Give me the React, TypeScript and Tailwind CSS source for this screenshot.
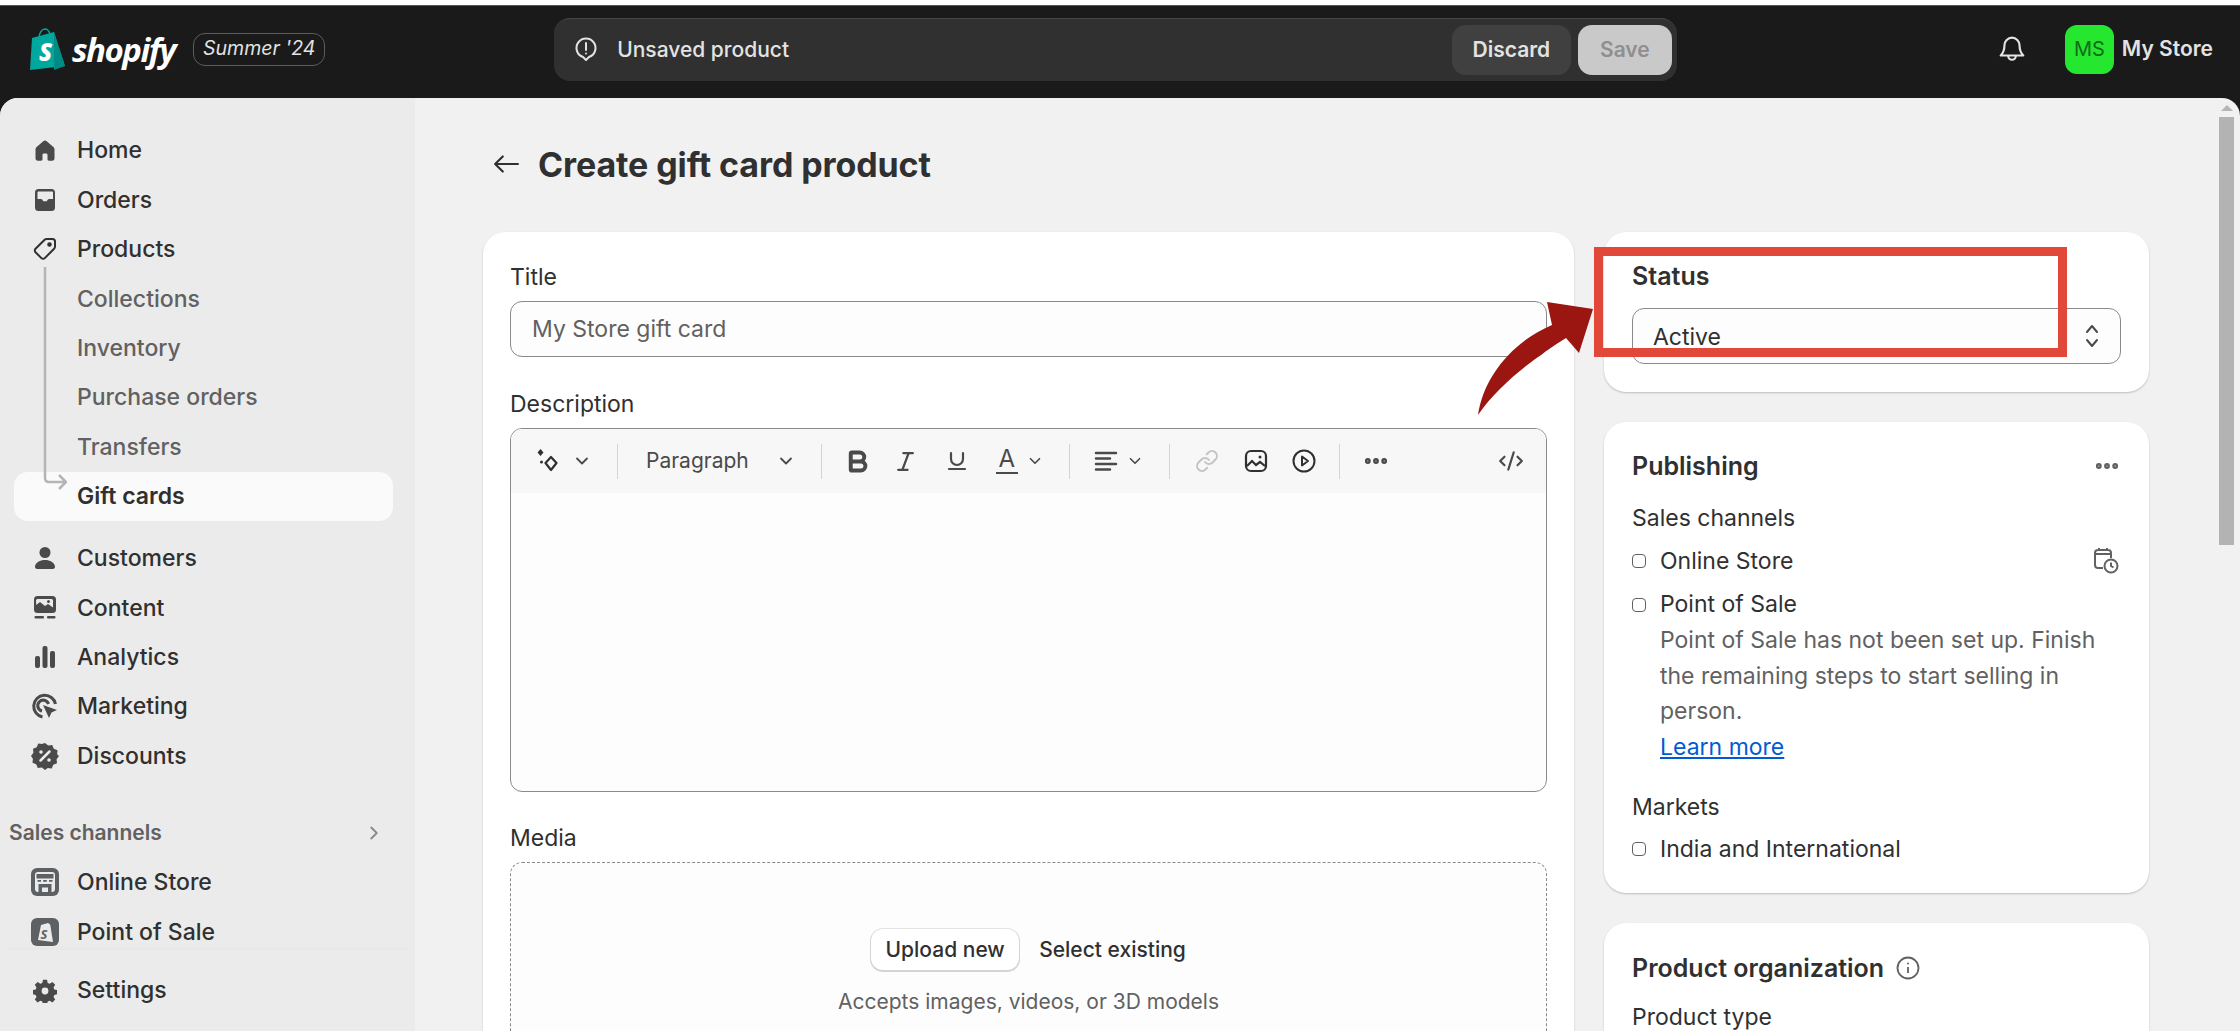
import React from "react";
import { Bold, ChevronDown, ChevronRight, CodeXml, Ellipsis, Italic, Link, Underline } from "lucide-react";

const Home = () => (
  <svg viewBox="0 0 24 24" className="h-[24px] w-[24px]" fill="#4a4a4a">
    <path d="M12 1.500c-.6 0-1.200.3-1.700.7L3.600 8c-.7.6-1.100 1.400-1.100 2.300v9.200c0 1.200 1 2.200 2.200 2.200h3.400c.8 0 1.400-.6 1.400-1.400v-4.500c0-.8.6-1.400 1.400-1.400h2.200c.8 0 1.400.6 1.400 1.400v4.500c0 .8.6 1.400 1.400 1.400h3.400c1.200 0 2.200-1 2.200-2.200v-9.200c0-.9-.4-1.700-1.100-2.300l-6.700-5.800c-.5-.4-1.100-.7-1.700-.7z" />
  </svg>
);

const Orders = () => (
  <svg viewBox="0 0 24 24" className="h-[24px] w-[24px]" fill="#4a4a4a">
    <path fillRule="evenodd" d="M5.500 1h13A3.500 3.500 0 0 1 22 4.500v15a3.500 3.500 0 0 1-3.500 3.500h-13A3.500 3.500 0 0 1 2 19.500v-15A3.500 3.500 0 0 1 5.500 1zM5.500 3.500a1 1 0 0 0-1 1V11h3.300c.8 0 1.300.4 1.700 1l.8 1.200h3.400l.8-1.200c.4-.6.9-1 1.700-1h3.800V4.500a1 1 0 0 0-1-1z" />
  </svg>
);

const Tag = () => (
  <svg viewBox="0 0 24 24" className="h-[24px] w-[24px]" fill="none" stroke="#303030" strokeWidth="2">
    <path d="M14.500 2h5a2.500 2.500 0 0 1 2.500 2.500v5c0 .9-.3 1.600-.9 2.200l-9.300 9.400a2.400 2.400 0 0 1-3.400 0l-5.900-5.900a2.400 2.400 0 0 1 0-3.400l9.400-9.300c.6-.6 1.300-.5 2.600-.5z" />
    <circle cx="16.500" cy="7.500" r="1.300" fill="#303030" />
  </svg>
);

const Customers = () => (
  <svg viewBox="0 0 24 24" className="h-[24px] w-[24px]" fill="#4a4a4a">
    <circle cx="12" cy="6.500" r="5.500" />
    <path d="M12 14c-5 0-9.500 2.500-10 6.500-.2 1.300.8 2.500 2.100 2.500h15.800c1.300 0 2.300-1.200 2.100-2.500C21.500 16.500 17 14 12 14z" />
  </svg>
);

const Content = () => (
  <svg viewBox="0 0 24 24" className="h-[24px] w-[24px]" fill="#4a4a4a">
    <path fillRule="evenodd" d="M4.500 0h15A3.500 3.500 0 0 1 23 3.500v10a3.500 3.500 0 0 1-3.500 3.500h-15A3.500 3.500 0 0 1 1 13.500v-10A3.500 3.500 0 0 1 4.500 0zM3.300 9l3.700-3 5 4 3-2 5 3.500v-7a1.500 1.500 0 0 0-1.500-1.500h-14a1.500 1.500 0 0 0-1.500 1.500z" />
    <circle cx="15.500" cy="5.500" r="1.500" />
    <rect x="1.500" y="20" width="9.500" height="2.500" rx="1" />
    <rect x="14" y="20" width="8.500" height="2.500" rx="1" />
  </svg>
);

const Analytics = () => (
  <svg viewBox="0 0 24 24" className="h-[24px] w-[24px]" fill="#4a4a4a">
    <rect x="2" y="11" width="5" height="12" rx="2" />
    <rect x="9.500" y="1" width="5" height="22" rx="2" />
    <rect x="17" y="6" width="5" height="17" rx="2" />
  </svg>
);

const Marketing = () => (
  <svg viewBox="0 0 28 28" className="h-[28px] w-[28px]" fill="none" stroke="#4a4a4a" strokeWidth="3">
    <path d="M11.500 24A11 11 0 1 1 24.500 11" />
    <path d="M11 18a5.500 5.500 0 1 1 6.500-7" />
    <path d="M12 12l14 5-5.500 2.500L18 25z" fill="#4a4a4a" stroke="none" />
  </svg>
);

const Discounts = () => (
  <svg viewBox="0 0 28 28" className="h-[28px] w-[28px]">
    <path fill="#4a4a4a" d="M14 1l3.200 2.400 4-.4 1.600 3.700 3.700 1.600-.4 4L28 14l-2.400 3.200.4 4-3.700 1.600-1.600 3.700-4-.4L14 28l-3.200-2.400-4 .4-1.600-3.700-3.700-1.600.4-4L0 14l2.400-3.200-.4-4 3.700-1.600L7.300 1.500l3.500.4z" />
    <path d="M9.500 18.500l9-9" stroke="#ebebeb" strokeWidth="2.500" strokeLinecap="round" />
    <circle cx="10" cy="10" r="1.800" fill="#ebebeb" />
    <circle cx="18" cy="18" r="1.800" fill="#ebebeb" />
  </svg>
);

const OnlineStore = () => (
  <svg viewBox="0 0 28 28" className="h-[28px] w-[28px]">
    <rect width="28" height="28" rx="6" fill="#5e6163" />
    <rect x="4" y="4" width="20" height="20" rx="3" fill="#ebebeb" />
    <path d="M5.500 6h17v4.500h-17z" fill="#5e6163" />
    <path d="M6.500 12h3.500v1.800H6.500zM12.200 12h3.600v1.800h-3.600zM18 12h3.500v1.800H18z" fill="#5e6163" />
    <path d="M7.500 16h13v8h-3.500v-4.500h-6V24H7.500z" fill="#5e6163" />
  </svg>
);

const PointOfSale = () => (
  <svg viewBox="0 0 28 28" className="h-[28px] w-[28px]">
    <rect width="28" height="28" rx="6" fill="#5e6163" />
    <path d="M10 7l7-2 2.200 1.500L22 24l-15-2z" fill="#ebebeb" />
    <text x="9.500" y="21" fontSize="13" fontWeight="700" fontStyle="italic" fill="#5e6163" fontFamily="Open Sans, sans-serif">S</text>
  </svg>
);

const Gear = () => (
  <svg viewBox="0 0 24 24" className="h-[24px] w-[24px]">
    <path fill="#4a4a4a" d="M10 .8h4l.7 3.100 2 .8 2.700-1.700 2.800 2.800-1.700 2.700.8 2 3.100.7v4l-3.100.7-.8 2 1.700 2.700-2.800 2.800-2.700-1.700-2 .8-.7 3.100h-4l-.7-3.100-2-.8-2.700 1.700-2.800-2.800 1.700-2.700-.8-2-3.100-.7v-4l3.100-.7.8-2-1.700-2.700 2.800-2.800 2.700 1.700 2-.8z" />
    <circle cx="12" cy="12" r="3.400" fill="#ebebeb" />
  </svg>
);

const Row = ({ icon, label, dim }: { icon?: React.ReactNode; label: string; dim?: boolean }) => (
  <div className="flex h-[49.4px] items-center">
    <div className="flex w-[77px] justify-center pl-[24px] pr-[11px]">{icon}</div>
    <span className={dim ? "text-[#616161]" : "text-[#303030]"}>{label}</span>
  </div>
);

const Sidebar = () => (
  <aside className="flex w-[415px] shrink-0 flex-col bg-[#ebebeb] text-[23px] font-medium">
    <div className="min-h-0 flex-1 overflow-hidden pt-[28px]">
      <Row icon={<Home />} label="Home" />
      <Row icon={<Orders />} label="Orders" />
      <Row icon={<Tag />} label="Products" />
      <div className="relative">
        {/* connector from Products down to the selected child */}
        <svg className="absolute left-[43px] top-[-7px] z-10" width="24" height="234" fill="none" stroke="#b5b5b5" strokeWidth="2.500">
          <path d="M2 0v211q0 4 4 4h16M16 208l7 7-7 7" />
        </svg>
        <Row label="Collections" dim />
        <Row label="Inventory" dim />
        <Row label="Purchase orders" dim />
        <Row label="Transfers" dim />
        <div className="ml-[14px] flex h-[49px] w-[379px] items-center rounded-[14px] bg-[#fafafa] pl-[63px] font-semibold text-[#303030]">
          Gift cards
        </div>
      </div>
      <div className="mt-[13px]">
        <Row icon={<Customers />} label="Customers" />
        <Row icon={<Content />} label="Content" />
        <Row icon={<Analytics />} label="Analytics" />
        <Row icon={<Marketing />} label="Marketing" />
        <Row icon={<Discounts />} label="Discounts" />
      </div>
      <div className="mt-[28px] flex h-[49px] items-center justify-between pl-[9px] pr-[30px] text-[21px] font-semibold text-[#616161]">
        Sales channels
        <ChevronRight size={22} color="#8a8a8a" strokeWidth={2} />
      </div>
      <Row icon={<OnlineStore />} label="Online Store" />
      <Row icon={<PointOfSale />} label="Point of Sale" />
    </div>
    <div className="h-[81px] shrink-0 pt-[16px] shadow-[0_-6px_8px_-7px_rgba(0,0,0,0.05)]">
      <Row icon={<Gear />} label="Settings" />
    </div>
  </aside>
);

const TopBar = () => (
  <header className="flex h-[92px] shrink-0 items-center bg-[#1a1a1a] pb-[6px] pl-[28px] pr-[27px]">
    <svg viewBox="0 0 38 42" className="h-[42px] w-[38px]">
      <path d="M4 10l22-6 11 34-35 4z" fill="#00a79d" />
      <path d="M26 4l11 34-11 4z" fill="#008b84" />
      <path d="M11 10c0-5 3-9 6-9s4 2 5 5" fill="none" stroke="#00a79d" strokeWidth="1.500" />
      <text x="11" y="33" fontSize="24" fontWeight="800" fontStyle="italic" fill="#fff" fontFamily="Open Sans, sans-serif">S</text>
    </svg>
    <span className="ml-[6px] font-['Open_Sans',sans-serif] text-[33px] font-bold italic leading-none tracking-[-1.500px] text-white">shopify</span>
    <span className="ml-[18px] flex h-[33px] w-[132px] items-center justify-center rounded-[12px] border border-[#5c5c5c] text-[19.500px] italic text-[#e3e3e3]">
      Summer '24
    </span>
    <div className="ml-[229px] flex h-[63px] w-[1123px] items-center rounded-[16px] border-t border-[#454545] bg-[#303030] pl-[20px] pr-[5px]">
      <svg viewBox="0 0 24 26" className="h-[26px] w-[24px]" fill="none" stroke="#e3e3e3" strokeWidth="2">
        <path d="M12 23l-3-3A9.500 9.500 0 1 1 15 20z" strokeLinejoin="round" />
        <path d="M12 6v7" strokeLinecap="round" />
        <circle cx="12" cy="16.500" r="1" fill="#e3e3e3" stroke="none" />
      </svg>
      <span className="ml-[19px] flex-1 text-[21px] font-medium text-[#e3e3e3]">Unsaved product</span>
      <button className="h-[50px] w-[119px] rounded-[14px] bg-[#404040] text-[21px] font-semibold text-[#e3e3e3]">Discard</button>
      <button className="ml-[7px] h-[50px] w-[94px] rounded-[14px] bg-[#c9c9c9] text-[21px] font-semibold text-[#8f8f8f]">Save</button>
    </div>
    <svg viewBox="0 0 26 26" className="ml-[321px] h-[28px] w-[28px]" fill="none" stroke="#e3e3e3" strokeWidth="2">
      <path d="M13 2.500a7 7 0 0 0-7 7c0 5-1 7-3.500 9.500h21c-2.500-2.500-3.500-4.500-3.500-9.500a7 7 0 0 0-7-7z" strokeLinejoin="round" />
      <path d="M9.500 19.500a3.500 3.500 0 0 0 7 0" />
    </svg>
    <div className="ml-[39px] flex h-[49px] w-[49px] items-center justify-center rounded-[12px] bg-[#26e72f] text-[20px] text-[#0e6b17]">MS</div>
    <span className="ml-[8px] whitespace-nowrap text-[21px] font-semibold text-[#e3e3e3]">My Store</span>
  </header>
);

const Sep = ({ className }: { className: string }) => <div className={`h-[35px] w-px bg-[#d4d4d4] ${className}`} />;

const Toolbar = () => (
  <div className="flex h-[64px] items-center bg-[#f7f7f7] text-[#4a4a4a]">
    <svg viewBox="0 0 26 26" className="ml-[24px] h-[26px] w-[26px]" fill="none" stroke="#303030" strokeWidth="2.200">
      <path d="M5.500 1l3 3.500-3 3.500-3-3.500z" fill="#303030" stroke="none" />
      <path d="M16 9l5.500 6-5.500 7-5.500-7z" strokeLinejoin="round" />
      <circle cx="6.500" cy="14" r="1.500" fill="#303030" stroke="none" />
    </svg>
    <ChevronDown size={20} strokeWidth={2.200} className="ml-[11px]" />
    <Sep className="ml-[25px]" />
    <span className="ml-[28px] text-[21px]">Paragraph</span>
    <ChevronDown size={20} strokeWidth={2.200} className="ml-[27px]" />
    <Sep className="ml-[25px]" />
    <Bold size={27} strokeWidth={3.500} className="ml-[22px]" />
    <Italic size={25} strokeWidth={2.200} className="ml-[22px]" />
    <Underline size={24} strokeWidth={2.200} className="ml-[27px]" />
    <div className="ml-[27px] flex flex-col items-center">
      <span className="h-[20px] text-[24px] leading-[20px]">A</span>
      <span className="mt-[3px] h-[2px] w-[22px] bg-[#4a4a4a]" />
    </div>
    <ChevronDown size={18} strokeWidth={2.200} className="ml-[8px]" />
    <Sep className="ml-[25px]" />
    <svg viewBox="0 0 24 24" className="ml-[24px] h-[24px] w-[24px]" stroke="#4a4a4a" strokeWidth="2.500" strokeLinecap="round">
      <path d="M2 4h20M2 9.500h14M2 15h20M2 20.500h14" />
    </svg>
    <ChevronDown size={18} strokeWidth={2.200} className="ml-[8px]" />
    <Sep className="ml-[25px]" />
    <Link size={24} strokeWidth={2} color="#c4c4c4" className="ml-[25px]" />
    <svg viewBox="0 0 24 24" className="ml-[25px] h-[24px] w-[24px]" fill="none" stroke="#303030" strokeWidth="2.200">
      <rect x="2" y="2" width="20" height="20" rx="5" />
      <path d="M3 17l5-5 4 4 4-3 5 4" />
      <circle cx="16" cy="8" r="1.500" fill="#303030" stroke="none" />
    </svg>
    <svg viewBox="0 0 24 24" className="ml-[24px] h-[24px] w-[24px]" fill="none" stroke="#303030" strokeWidth="2">
      <circle cx="12" cy="12" r="10.500" />
      <path d="M10 7.500l6 4.500-6 4.500z" strokeLinejoin="round" />
    </svg>
    <Sep className="ml-[23px]" />
    <Ellipsis size={28} strokeWidth={3} className="ml-[22px]" />
    <CodeXml size={26} strokeWidth={2} className="ml-auto mr-[22px]" />
  </div>
);

const Bullet = () => <span className="h-[14px] w-[14px] shrink-0 rounded-[4px] border-[1.500px] border-[#616161]" />;

const UpDown = () => (
  <svg viewBox="0 0 14 26" className="h-[26px] w-[14px]" fill="none" stroke="#4a4a4a" strokeWidth="2" strokeLinecap="round" strokeLinejoin="round">
    <path d="M2 9l5-6 5 6M2 17l5 6 5-6" />
  </svg>
);

const Card = ({ className, children }: { className?: string; children: React.ReactNode }) => (
  <section className={`rounded-[22px] bg-white shadow-[0_1px_2px_rgba(0,0,0,0.22)] ${className ?? ""}`}>{children}</section>
);

const MainForm = () => (
  <Card className="w-[1091px] shrink-0 px-[27px] pt-[31px]">
    <div className="leading-[28px]">Title</div>
    <div className="mt-[10px] flex h-[56px] items-center rounded-[12px] border border-[#8a8a8a] bg-[#fdfdfd] pl-[21px] text-[#616161]">
      My Store gift card
    </div>
    <div className="mt-[33px] leading-[28px]">Description</div>
    <div className="mt-[10px] h-[364px] overflow-hidden rounded-[12px] border border-[#8a8a8a] bg-[#fdfdfd]">
      <Toolbar />
    </div>
    <div className="mt-[32px] leading-[28px]">Media</div>
    <div className="mt-[10px] flex h-[330px] flex-col items-center rounded-[12px] border border-dashed border-[#8a8a8a] bg-[#fdfdfd] pt-[66px]">
      <div className="flex items-center">
        <button className="h-[41px] w-[148px] rounded-[12px] bg-white text-[21px] font-medium shadow-[0_1px_0_1px_#d4d4d4,0_0_0_1px_#e3e3e3]">Upload new</button>
        <span className="ml-[20px] text-[21px] font-medium">Select existing</span>
      </div>
      <div className="mt-[16px] text-[21px] text-[#616161]">Accepts images, videos, or 3D models</div>
    </div>
  </Card>
);

const SideCards = () => (
  <div className="flex w-[545px] shrink-0 flex-col gap-[30px]">
    <Card className="h-[160px] px-[28px] pt-[30px]">
      <div className="text-[25px] font-semibold leading-[28px]">Status</div>
      <div className="mt-[18px] flex h-[56px] items-center justify-between rounded-[12px] border border-[#8a8a8a] bg-[#fdfdfd] pl-[20px] pr-[21px]">
        <span className="pt-[2px]">Active</span>
        <UpDown />
      </div>
    </Card>
    <Card className="h-[471px] px-[28px] pt-[30px]">
      <div className="flex items-center justify-between text-[25px] font-semibold leading-[28px]">
        Publishing
        <Ellipsis size={28} strokeWidth={3} color="#616161" />
      </div>
      <div className="mt-[24px] leading-[28px]">Sales channels</div>
      <div className="mt-[15px] flex h-[28px] items-center gap-[14px]">
        <Bullet />
        Online Store
        <svg viewBox="0 0 28 28" className="ml-auto mr-[2px] h-[28px] w-[28px]" fill="none" stroke="#616161" strokeWidth="2">
          <path d="M12 21H7a3 3 0 0 1-3-3V6a3 3 0 0 1 3-3h10a3 3 0 0 1 3 3v5M4 7h16M8 1v3M16 1v3" />
          <circle cx="20" cy="19" r="6.500" />
          <path d="M20 15.500V19l2.500 1.500" />
        </svg>
      </div>
      <div className="mt-[15.500px] flex h-[28px] items-center gap-[14px]">
        <Bullet />
        Point of Sale
      </div>
      <div className="mt-[4.500px] pl-[28px] leading-[35.500px] text-[#616161]">
        Point of Sale has not been set up. Finish
        <br />
        the remaining steps to start selling in
        <br />
        person.
      </div>
      <div className="-mt-[1px] pl-[28px] leading-[36px] text-[#005bd3] underline">Learn more</div>
      <div className="mt-[28.500px] leading-[28px]">Markets</div>
      <div className="mt-[14px] flex h-[28px] items-center gap-[14px]">
        <Bullet />
        India and International
      </div>
    </Card>
    <Card className="h-[300px] px-[28px] pt-[31px]">
      <div className="flex items-center gap-[12px] text-[25px] font-semibold leading-[28px]">
        Product organization
        <svg viewBox="0 0 24 24" className="h-[24px] w-[24px]" fill="none" stroke="#616161" strokeWidth="1.800">
          <circle cx="12" cy="12" r="10.500" />
          <path d="M12 11v6" />
          <circle cx="12" cy="7.500" r="1" fill="#616161" stroke="none" />
        </svg>
      </div>
      <div className="mt-[21px] leading-[28px]">Product type</div>
    </Card>
  </div>
);

const Scrollbar = () => (
  <div className="flex w-[15px] shrink-0 flex-col items-center">
    <div className="mt-[7px] h-0 w-0 border-x-[6px] border-b-[6px] border-x-transparent border-b-[#b5b5b5]" />
    <div className="mt-[6px] h-[428px] w-full bg-[#b3b3b3]" />
  </div>
);

export default function App() {
  return (
    <div className="flex h-[1031px] w-[2240px] flex-col overflow-hidden bg-white font-['Inter',sans-serif] text-[23px] text-[#303030]">
      <div className="h-[6px] shrink-0 border-b border-[#555555] bg-white" />
      <TopBar />
      <div className="relative min-h-0 flex-1 bg-[#1a1a1a]">
        <div className="flex h-full overflow-hidden rounded-t-[18px] bg-[#f1f1f1]">
          <Sidebar />
          <main className="flex-1 pl-[68px] pr-[70px]">
            <div className="flex h-[134px] items-center pb-[2px]">
              <svg viewBox="0 0 24 24" className="ml-[10px] h-[26px] w-[26px]" fill="none" stroke="#303030" strokeWidth="2" strokeLinecap="round" strokeLinejoin="round">
                <path d="M23 12H2M9 5l-7 7 7 7" />
              </svg>
              <h1 className="ml-[19px] text-[34px] font-bold tracking-[-0.100px]">Create gift card product</h1>
            </div>
            <div className="flex gap-[30px]">
              <MainForm />
              <SideCards />
            </div>
          </main>
          <Scrollbar />
          <div className="w-[6px] shrink-0" />
        </div>
        {/* annotation drawn on top of the screenshot */}
        <div className="absolute left-[1594px] top-[149px] h-[110px] w-[473px] border-[9px] border-[#e2483a]" />
        <svg className="absolute left-[1470px] top-[195px]" width="130" height="130">
          <path d="M8 122C14 82 44 48 82 32L77 9l46 7-14 44-13-15C66 64 30 90 8 122z" fill="#9b1610" />
        </svg>
      </div>
    </div>
  );
}
